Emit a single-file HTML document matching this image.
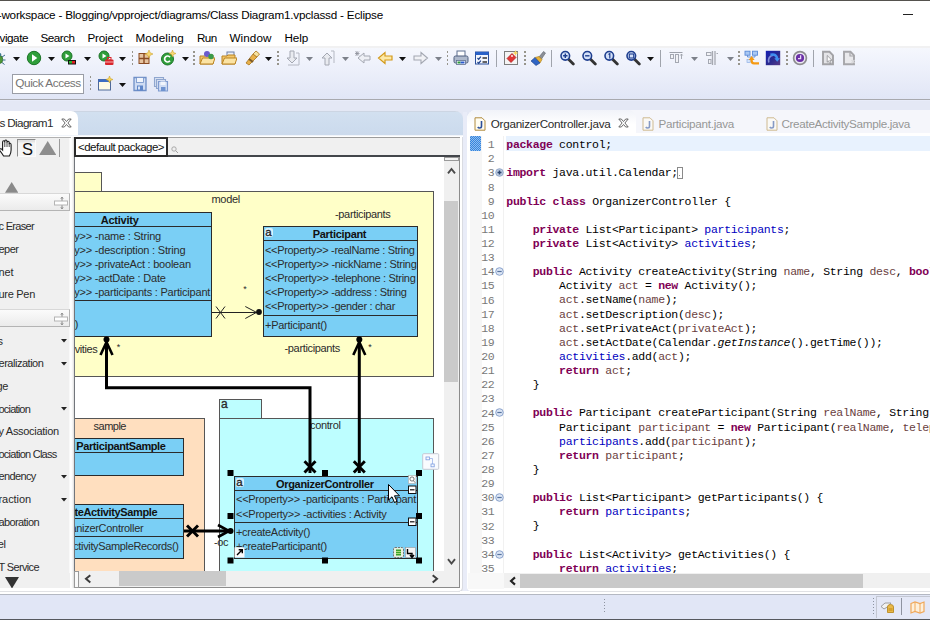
<!DOCTYPE html>
<html><head><meta charset="utf-8"><title>Eclipse</title>
<style>
html,body{margin:0;padding:0;background:#e4e8f5;}
body{width:930px;height:620px;overflow:hidden;position:relative;font-family:"Liberation Sans",sans-serif;}
.a{position:absolute;display:block;}
.t{position:absolute;white-space:nowrap;display:block;}
#root{position:absolute;left:0;top:0;width:930px;height:620px;overflow:hidden;}
</style></head><body><div id="root">
<div class="a" style="left:0px;top:0px;width:930px;height:1px;background:#55524e;"></div>
<div class="a" style="left:0px;top:1px;width:930px;height:46px;background:#fff;"></div>
<span class="t" style="letter-spacing:-0.209px;top:7.10px;font-size:11.7px;line-height:15px;color:#000;left:-2.3px;">-workspace - Blogging/vpproject/diagrams/Class Diagram1.vpclassd - Eclipse</span>
<div class="a" style="left:903px;top:14px;width:10px;height:1px;background:#222;"></div>
<span class="t" style="letter-spacing:-0.451px;top:30.30px;font-size:11.7px;line-height:15px;color:#000;left:-0.5px;">vigate</span>
<span class="t" style="letter-spacing:-0.508px;top:30.30px;font-size:11.7px;line-height:15px;color:#000;left:40.5px;">Search</span>
<span class="t" style="letter-spacing:-0.199px;top:30.30px;font-size:11.7px;line-height:15px;color:#000;left:87.5px;">Project</span>
<span class="t" style="letter-spacing:0.133px;top:30.30px;font-size:11.7px;line-height:15px;color:#000;left:135.5px;">Modeling</span>
<span class="t" style="letter-spacing:-0.651px;top:30.30px;font-size:11.7px;line-height:15px;color:#000;left:197.0px;">Run</span>
<span class="t" style="letter-spacing:0.070px;top:30.30px;font-size:11.7px;line-height:15px;color:#000;left:229.5px;">Window</span>
<span class="t" style="letter-spacing:-0.137px;top:30.30px;font-size:11.7px;line-height:15px;color:#000;left:284.5px;">Help</span>
<div class="a" style="left:0px;top:46px;width:930px;height:2px;background:#f1f1f2;"></div>
<div class="a" style="left:0px;top:48px;width:930px;height:51px;background:linear-gradient(#f5f7fd 0,#eef1fb 35%,#e7ebf8 70%,#e1e6f6 100%);"></div>
<div class="a" style="left:0px;top:99px;width:930px;height:521px;background:#e4e8f5;"></div>
<div class="a" style="left:0px;top:99px;width:930px;height:1px;background:#a8a9ae;"></div>
<div class="a" style="left:0px;top:100px;width:930px;height:1px;background:#e8ecf9;"></div>
<svg class="a" style="left:-9.0px;top:50.1px" width="16" height="16" viewBox="0 0 16 16"><ellipse cx="8.5" cy="9.5" rx="3.2" ry="4" fill="#4f9a3a" stroke="#2d6a22" stroke-width=".8"/><circle cx="8.5" cy="4.8" r="1.8" fill="#3d7a8e"/><path d="M11 7L14 5M11.5 10H14.5M11 12.5L13.5 14.5M6 7L4 5M5.5 10H3M6 12.5L4 14.5" stroke="#3d6f8e" stroke-width="1" fill="none"/></svg>
<svg class="a" style="left:12.5px;top:56.5px" width="7" height="4" viewBox="0 0 7 4"><path d="M0 0H7L3.5 4Z" fill="#111"/></svg>
<svg class="a" style="left:26.0px;top:50.1px" width="16" height="16" viewBox="0 0 16 16"><circle cx="8" cy="8" r="6.7" fill="#2f9e3a" stroke="#1d7428" stroke-width="1"/><path d="M6 4.3L11.3 8L6 11.7Z" fill="#fff"/></svg>
<svg class="a" style="left:48.0px;top:56.5px" width="7" height="4" viewBox="0 0 7 4"><path d="M0 0H7L3.5 4Z" fill="#111"/></svg>
<svg class="a" style="left:60.8px;top:50.1px" width="16" height="16" viewBox="0 0 16 16"><circle cx="6" cy="6" r="5" fill="#2f9e3a" stroke="#1d7428"/><path d="M4.5 3.5L8.5 6L4.5 8.5Z" fill="#fff"/><rect x="7" y="10" width="8" height="4.5" fill="#111"/><rect x="8" y="11" width="3" height="2.5" fill="#2db32d"/><rect x="11" y="11" width="3" height="2.5" fill="#e02020"/></svg>
<svg class="a" style="left:83.5px;top:56.5px" width="7" height="4" viewBox="0 0 7 4"><path d="M0 0H7L3.5 4Z" fill="#111"/></svg>
<svg class="a" style="left:97.7px;top:50.1px" width="16" height="16" viewBox="0 0 16 16"><circle cx="6" cy="6" r="5" fill="#2f9e3a" stroke="#1d7428"/><path d="M4.5 3.5L8.5 6L4.5 8.5Z" fill="#fff"/><rect x="7" y="9.5" width="8.5" height="5.5" rx="1" fill="#d8262c"/><rect x="9.5" y="7.5" width="3.5" height="2.5" fill="none" stroke="#d8262c"/><rect x="7" y="11.5" width="8.5" height="1" fill="#f6b0b0"/></svg>
<svg class="a" style="left:119.0px;top:56.5px" width="7" height="4" viewBox="0 0 7 4"><path d="M0 0H7L3.5 4Z" fill="#111"/></svg>
<div class="a" style="left:131.6px;top:50.5px;width:1.8px;height:16.0px;background:repeating-linear-gradient(#97958c 0 2px,transparent 2px 4.1px);"></div>
<svg class="a" style="left:137.0px;top:50.1px" width="16" height="16" viewBox="0 0 16 16"><rect x="2" y="3.5" width="10" height="10" fill="#e6c4a0" stroke="#8a4b23"/><path d="M7 3V14M2 8.5H12" stroke="#8a4b23" stroke-width="1.4"/><path d="M12 0L13.2 2.8L16 4L13.2 5.2L12 8L10.8 5.2L8 4L10.8 2.8Z" fill="#f7d774" stroke="#c79a1c" stroke-width=".5"/></svg>
<svg class="a" style="left:160.0px;top:50.1px" width="16" height="16" viewBox="0 0 16 16"><circle cx="7.5" cy="9" r="6" fill="#2f9e3a" stroke="#1d7428"/><path d="M10 7.2A3 3 0 1 0 10 10.8" stroke="#fff" stroke-width="1.7" fill="none"/><path d="M12.5 0L13.5 2.5L16 3.5L13.5 4.5L12.5 7L11.5 4.5L9 3.5L11.5 2.5Z" fill="#f7d774" stroke="#c79a1c" stroke-width=".5"/></svg>
<svg class="a" style="left:181.5px;top:56.5px" width="7" height="4" viewBox="0 0 7 4"><path d="M0 0H7L3.5 4Z" fill="#111"/></svg>
<div class="a" style="left:193.1px;top:50.5px;width:1.8px;height:16.0px;background:repeating-linear-gradient(#97958c 0 2px,transparent 2px 4.1px);"></div>
<svg class="a" style="left:198.5px;top:50.1px" width="16" height="16" viewBox="0 0 16 16"><path d="M1 6H6L7 5H14V14H1Z" fill="#f3c76a" stroke="#b98322"/><path d="M1 14L3.5 8H16L14 14Z" fill="#fbe3a3" stroke="#b98322"/><circle cx="8" cy="4" r="3" fill="#6a5acd"/><circle cx="12" cy="6.5" r="2.7" fill="#3a9a4a"/></svg>
<svg class="a" style="left:220.5px;top:50.1px" width="16" height="16" viewBox="0 0 16 16"><rect x="6" y="2" width="7" height="5" fill="#e8eef8" stroke="#6d7fa6"/><path d="M1 6H6L7 5H14V14H1Z" fill="#f3c76a" stroke="#b98322"/><path d="M1 14L3.5 8H16L14 14Z" fill="#fbe3a3" stroke="#b98322"/></svg>
<svg class="a" style="left:244.0px;top:50.1px" width="16" height="16" viewBox="0 0 16 16"><path d="M2 13L9 4L13 7L5 15Z" fill="#e8b04a" stroke="#a8741a" stroke-width=".8"/><path d="M9 4L12 1L15.5 4L13 7Z" fill="#f7e2a0" stroke="#a8741a" stroke-width=".8"/><path d="M5 9L9 12" stroke="#7a5a2a" stroke-width="2"/></svg>
<svg class="a" style="left:265.0px;top:56.5px" width="7" height="4" viewBox="0 0 7 4"><path d="M0 0H7L3.5 4Z" fill="#111"/></svg>
<div class="a" style="left:277.1px;top:50.5px;width:1.8px;height:16.0px;background:repeating-linear-gradient(#97958c 0 2px,transparent 2px 4.1px);"></div>
<svg class="a" style="left:283.5px;top:50.1px" width="16" height="16" viewBox="0 0 16 16"><path d="M6 1H10V8H13L8 13L3 8H6Z" fill="#e9ebf0" stroke="#a4a8b2"/><path d="M12 3H15V15H4" stroke="#b4b8c2" fill="none"/></svg>
<svg class="a" style="left:305.5px;top:56.5px" width="7" height="4" viewBox="0 0 7 4"><path d="M0 0H7L3.5 4Z" fill="#7d818a"/></svg>
<svg class="a" style="left:319.0px;top:50.1px" width="16" height="16" viewBox="0 0 16 16"><path d="M6 15H10V8H13L8 3L3 8H6Z" fill="#e9ebf0" stroke="#a4a8b2"/><path d="M12 1H15V13" stroke="#b4b8c2" fill="none"/></svg>
<svg class="a" style="left:341.5px;top:56.5px" width="7" height="4" viewBox="0 0 7 4"><path d="M0 0H7L3.5 4Z" fill="#7d818a"/></svg>
<svg class="a" style="left:355.0px;top:50.1px" width="16" height="16" viewBox="0 0 16 16"><path d="M15 6H9V3L3 8L9 13V10H15Z" fill="#eef0f5" stroke="#a4a8b2"/><path d="M2 1V6M0 3.5H4.5M.5 1.5L4 5.5M4 1.5L.5 5.5" stroke="#8d919a" stroke-width=".8"/></svg>
<svg class="a" style="left:377.0px;top:50.1px" width="16" height="16" viewBox="0 0 16 16"><path d="M15 6H8V2.5L1.5 8L8 13.5V10H15Z" fill="#fde9a6" stroke="#d39a1c" stroke-width="1.2"/></svg>
<svg class="a" style="left:398.5px;top:56.5px" width="7" height="4" viewBox="0 0 7 4"><path d="M0 0H7L3.5 4Z" fill="#111"/></svg>
<svg class="a" style="left:413.0px;top:50.1px" width="16" height="16" viewBox="0 0 16 16"><path d="M1 6H8V2.5L14.5 8L8 13.5V10H1Z" fill="#f1f2f6" stroke="#a4a8b2" stroke-width="1.1"/></svg>
<svg class="a" style="left:434.5px;top:56.5px" width="7" height="4" viewBox="0 0 7 4"><path d="M0 0H7L3.5 4Z" fill="#7d818a"/></svg>
<div class="a" style="left:446.6px;top:50.5px;width:1.8px;height:16.0px;background:repeating-linear-gradient(#97958c 0 2px,transparent 2px 4.1px);"></div>
<svg class="a" style="left:452.5px;top:50.1px" width="16" height="16" viewBox="0 0 16 16"><rect x="4" y="1" width="8" height="6" fill="#fff" stroke="#5d6f8f"/><rect x="1" y="6" width="14" height="7" rx="1.5" fill="#aeb9cc" stroke="#4f5f7f"/><rect x="3.5" y="10.5" width="9" height="4" fill="#fff" stroke="#5d6f8f" stroke-width=".8"/><rect x="4.5" y="11.5" width="3" height="2" fill="#2a9a3a"/><rect x="7.5" y="11.5" width="4" height="2" fill="#2a5acd"/></svg>
<svg class="a" style="left:474.0px;top:50.1px" width="16" height="16" viewBox="0 0 16 16"><rect x="1.5" y="2" width="13" height="12" fill="#f4f7fd" stroke="#2a4f9a"/><rect x="1.5" y="2" width="13" height="3" fill="#2a62c8"/><path d="M3.5 8l1.2 1.4L6.8 6.6M3.5 12l1.2 1.4L6.8 10.6" stroke="#1b3f8a" stroke-width="1.2" fill="none"/><path d="M8.5 8H13M8.5 12H13" stroke="#333" stroke-width="1.4"/></svg>
<div class="a" style="left:495.5px;top:50px;width:1px;height:17px;background:#a0a4ac;"></div>
<svg class="a" style="left:503.0px;top:50.1px" width="16" height="16" viewBox="0 0 16 16"><rect x="1.5" y="1.5" width="13" height="13" fill="#f4f4f4" stroke="#7d7d7d"/><path d="M4 8.5L9 3.5L13 7.5L8 12.5Z" fill="#e03636" stroke="#a61b1b" stroke-width=".7"/><circle cx="9" cy="6" r=".9" fill="#fff"/><path d="M12.5 0L13.3 2.2L15.5 3L13.3 3.8L12.5 6L11.7 3.8L9.5 3L11.7 2.2Z" fill="#f7d45a"/></svg>
<div class="a" style="left:524.1px;top:50.5px;width:1.8px;height:16.0px;background:repeating-linear-gradient(#97958c 0 2px,transparent 2px 4.1px);"></div>
<svg class="a" style="left:530.0px;top:50.1px" width="16" height="16" viewBox="0 0 16 16"><path d="M9 7L13.5 1.5L15.5 3L11.5 9Z" fill="#8a8f98" stroke="#5f646c" stroke-width=".6"/><path d="M5 7.5L9 6.5L12 9.5L10 13Z" fill="#e7b23a" stroke="#a87a16" stroke-width=".6"/><path d="M1 11L5 7.5L10 13L6 15.5Z" fill="#2f65c4" stroke="#1d3f85" stroke-width=".6"/></svg>
<div class="a" style="left:550.5px;top:50px;width:1px;height:17px;background:#a0a4ac;"></div>
<svg class="a" style="left:559.0px;top:50.1px" width="16" height="16" viewBox="0 0 16 16"><path d="M9.3 9L14.3 14" stroke="#333" stroke-width="2.8" stroke-linecap="round"/><circle cx="6.3" cy="5.8" r="4.3" fill="#d3e0f8" stroke="#1f3f8f" stroke-width="1.6"/><path d="M4.1 5.8H8.5M6.3 3.6V8" stroke="#1f3f8f" stroke-width="1.4"/></svg>
<svg class="a" style="left:581.0px;top:50.1px" width="16" height="16" viewBox="0 0 16 16"><path d="M9.3 9L14.3 14" stroke="#333" stroke-width="2.8" stroke-linecap="round"/><circle cx="6.3" cy="5.8" r="4.3" fill="#d3e0f8" stroke="#1f3f8f" stroke-width="1.6"/><path d="M4.1 5.8H8.5" stroke="#1f3f8f" stroke-width="1.4"/></svg>
<svg class="a" style="left:603.0px;top:50.1px" width="16" height="16" viewBox="0 0 16 16"><path d="M9.3 9L14.3 14" stroke="#333" stroke-width="2.8" stroke-linecap="round"/><circle cx="6.3" cy="5.8" r="4.3" fill="#d3e0f8" stroke="#1f3f8f" stroke-width="1.6"/><path d="M5.5 4.5L6.8 3.6V8.4" stroke="#1f3f8f" stroke-width="1.2" fill="none"/></svg>
<svg class="a" style="left:625.0px;top:50.1px" width="16" height="16" viewBox="0 0 16 16"><path d="M9.3 9L14.3 14" stroke="#333" stroke-width="2.8" stroke-linecap="round"/><circle cx="6.3" cy="5.8" r="4.3" fill="#d3e0f8" stroke="#1f3f8f" stroke-width="1.6"/><rect x="4.3" y="4" width="4.4" height="4" fill="none" stroke="#1f3f8f" stroke-width="1.1"/></svg>
<svg class="a" style="left:647.0px;top:56.5px" width="7" height="4" viewBox="0 0 7 4"><path d="M0 0H7L3.5 4Z" fill="#111"/></svg>
<div class="a" style="left:659.5px;top:50px;width:1px;height:17px;background:#a0a4ac;"></div>
<svg class="a" style="left:668.0px;top:50.1px" width="16" height="16" viewBox="0 0 16 16"><path d="M1.5 2.5H14.5" stroke="#9da1aa"/><rect x="2.5" y="4.5" width="3" height="4" fill="#f1f2f6" stroke="#a4a8b2"/><rect x="7.5" y="4.5" width="3" height="8" fill="#f1f2f6" stroke="#a4a8b2"/><path d="M13.5 4V9M12.3 5.5L13.5 4L14.7 5.5" stroke="#9da1aa" fill="none" stroke-width=".9"/></svg>
<svg class="a" style="left:690.5px;top:56.5px" width="7" height="4" viewBox="0 0 7 4"><path d="M0 0H7L3.5 4Z" fill="#7d818a"/></svg>
<svg class="a" style="left:704.0px;top:50.1px" width="16" height="16" viewBox="0 0 16 16"><path d="M8.5 1V15M11 1V15" stroke="#a6a9b1" stroke-width="1.3"/><rect x="2.5" y="2.5" width="4.5" height="3" fill="#f1f2f6" stroke="#a4a8b2"/><rect x="4.5" y="9.5" width="2.5" height="4" fill="#f1f2f6" stroke="#a4a8b2"/><path d="M12.5 3.5H14" stroke="#a4a8b2"/></svg>
<svg class="a" style="left:726.5px;top:56.5px" width="7" height="4" viewBox="0 0 7 4"><path d="M0 0H7L3.5 4Z" fill="#7d818a"/></svg>
<div class="a" style="left:738.1px;top:50.5px;width:1.8px;height:16.0px;background:repeating-linear-gradient(#97958c 0 2px,transparent 2px 4.1px);"></div>
<svg class="a" style="left:743.5px;top:50.1px" width="16" height="16" viewBox="0 0 16 16"><rect x="1" y="1.2" width="5" height="4" fill="#a9c8f3" stroke="#5a8ad8" stroke-width=".9"/><rect x="8.5" y="1.2" width="5" height="4" fill="#a9c8f3" stroke="#5a8ad8" stroke-width=".9"/><path d="M3.5 5.2V7H11V5.2" stroke="#5a8ad8" fill="none" stroke-width=".9"/><rect x="3" y="9.5" width="3.2" height="3" fill="#d5e4f9" stroke="#8fb0e6" stroke-width=".7"/><path d="M15 13.3H10Q7.6 13.3 7.6 10.8V8.5" stroke="#f59a14" stroke-width="2.3" fill="none"/><path d="M4.6 10L7.6 6L10.6 10Z" fill="#f59a14"/></svg>
<svg class="a" style="left:765.0px;top:50.1px" width="16" height="16" viewBox="0 0 16 16"><defs><linearGradient id="gb" x1="0" y1="0" x2="1" y2="1"><stop offset="0" stop-color="#1420b4"/><stop offset=".55" stop-color="#2a2a8e"/><stop offset="1" stop-color="#5a3a86"/></linearGradient></defs><rect x=".8" y=".8" width="14.4" height="14.4" fill="url(#gb)"/><path d="M3.8 12.5Q2.5 6.5 8 5.2" stroke="#9aa6e8" stroke-width="1.6" fill="none" opacity=".8"/><path d="M5.5 4.8Q11.5 3.2 12.2 9" stroke="#3f8ff0" stroke-width="2.6" fill="none"/><path d="M9.3 8.2H15L12.2 11.8Z" fill="#3f8ff0"/></svg>
<div class="a" style="left:786.1px;top:50.5px;width:1.8px;height:16.0px;background:repeating-linear-gradient(#97958c 0 2px,transparent 2px 4.1px);"></div>
<svg class="a" style="left:792.0px;top:50.1px" width="16" height="16" viewBox="0 0 16 16"><circle cx="8" cy="8" r="6.4" fill="#ece9f3" stroke="#8d8d90" stroke-width="1.7"/><circle cx="8" cy="8" r="4.1" fill="#6a2fa6"/><path d="M8.6 5.3V8.6H6" stroke="#e9dcf6" stroke-width="1.3" fill="none"/></svg>
<div class="a" style="left:812.5px;top:50px;width:1px;height:17px;background:#a0a4ac;"></div>
<svg class="a" style="left:820.0px;top:50.1px" width="16" height="16" viewBox="0 0 16 16"><path d="M3 1.8H9.5L13 5.3V14.2H3Z" fill="#e4e4e7" stroke="#a2a2a6" stroke-width="1.9"/><path d="M7.2 5.5L12 10.3H9.8L11 13.2L9.8 13.8L8.5 10.9L7.2 12.2Z" fill="#fdfdfd" stroke="#8e8e92" stroke-width=".8"/></svg>
<svg class="a" style="left:841.0px;top:50.1px" width="16" height="16" viewBox="0 0 16 16"><path d="M3 1.8H9.5L13 5.3V14.2H3Z" fill="#e9e9ec" stroke="#a6a6aa" stroke-width="1.9"/><path d="M9 2.5V6H12.5" stroke="#a6a6aa" fill="none" stroke-width="1.2"/><path d="M10.5 10L13.5 13M13.5 10L10.5 13" stroke="#d9d9dc" stroke-width="1.2"/></svg>
<div class="a" style="left:12px;top:74px;width:72px;height:19.5px;background:#fff;border:1px solid #9a9da6;box-sizing:border-box;"></div>
<span class="t" style="letter-spacing:-0.451px;top:76.30px;font-size:11.8px;line-height:15px;color:#747474;left:15.3px;">Quick Access</span>
<div class="a" style="left:89.6px;top:76px;width:1.8px;height:16px;background:repeating-linear-gradient(#97958c 0 2px,transparent 2px 4.1px);"></div>
<svg class="a" style="left:96.5px;top:76.0px" width="16" height="16" viewBox="0 0 16 16"><rect x="1.5" y="3.5" width="12" height="10.5" fill="#fffbe6" stroke="#4f6a9a"/><rect x="1.5" y="3.5" width="12" height="2.5" fill="#3b6cc4"/><path d="M12.5 0L13.5 2.5L16 3.5L13.5 4.5L12.5 7L11.5 4.5L9 3.5L11.5 2.5Z" fill="#f7d45a" stroke="#c79a1c" stroke-width=".5"/></svg>
<svg class="a" style="left:118.5px;top:83.0px" width="7" height="4" viewBox="0 0 7 4"><path d="M0 0H7L3.5 4Z" fill="#111"/></svg>
<svg class="a" style="left:132.0px;top:76.0px" width="16" height="16" viewBox="0 0 16 16"><path d="M2 1.5H14V14.5H2Z" fill="#cfdcf3" stroke="#6f8fc7" stroke-width="1.3"/><rect x="4.5" y="1.5" width="7" height="5" fill="#f1f5fc" stroke="#6f8fc7" stroke-width=".8"/><rect x="5" y="9.5" width="6" height="5" fill="#5f86c9"/><rect x="6" y="10.5" width="2" height="3" fill="#dbe6f8"/></svg>
<svg class="a" style="left:153.0px;top:76.0px" width="16" height="16" viewBox="0 0 16 16"><path d="M1.5 1.5H10.5V10.5H1.5Z" fill="#d7e0f2" stroke="#8fa6cf" stroke-width="1.1"/><path d="M3.5 3.5H12.5V12.5H3.5Z" fill="#d7e0f2" stroke="#8fa6cf" stroke-width="1.1"/><path d="M5.5 5.5H14.5V15H5.5Z" fill="#cfdcf3" stroke="#7f9bd0" stroke-width="1.1"/><rect x="7.5" y="5.5" width="5" height="3.5" fill="#f1f5fc"/><rect x="8" y="11" width="4.5" height="4" fill="#6f93d0"/></svg>
<div class="a" style="left:463px;top:112px;width:4.2px;height:479px;background:#e9ecf8;"></div>
<div class="a" style="left:0px;top:110.5px;width:463.2px;height:481px;background:#fff;border-radius:0 9px 4px 0;box-shadow:inset -1px -1px 0 #d9dbe2;"></div>
<div class="a" style="left:0px;top:110.5px;width:462.7px;height:24px;border-radius:0 8px 0 0;background:linear-gradient(#c9d0dc 0,#d2e0f0 1.5px,#cddcee 70%,#ccdaec);"></div>
<div class="a" style="left:-10px;top:110.5px;width:88px;height:25px;background:#fff;border-radius:0 7px 0 0;"></div>
<span class="t" style="letter-spacing:-0.647px;top:114.80px;font-size:11.7px;line-height:15px;color:#2a2a2a;left:-0.5px;">s Diagram1</span>
<svg class="a" style="left:61.3px;top:117.9px" width="11" height="10" viewBox="0 0 11 10"><path d="M.8 1L3.3 1L5.5 3.5L7.7 1L10.2 1L6.9 5L10.2 9L7.7 9L5.5 6.5L3.3 9L.8 9L4.1 5Z" fill="none" stroke="#5a5a5a" stroke-width=".9"/></svg>
<div class="a" style="left:0px;top:134.5px;width:462.5px;height:2.5px;background:linear-gradient(#e6edf6,#fff 60%);"></div>
<div class="a" style="left:0px;top:136.5px;width:69.5px;height:451.5px;background:#f0f0f0;"></div>
<div class="a" style="left:69.3px;top:136.5px;width:4.7px;height:451.5px;background:linear-gradient(90deg,#f6f6f6,#fff 30%,#fcfcfc 60%,#dcdcdc);"></div>
<div class="a" style="left:0px;top:136.6px;width:70.5px;height:1px;background:#b2b2b2;"></div>
<svg class="a" style="left:-1px;top:138.5px" width="13" height="18" viewBox="0 0 13 18"><path d="M3.6 10.5V3.2Q3.6 1.8 4.7 1.8Q5.8 1.8 5.8 3.2V2.4Q5.8 1 6.9 1Q8 1 8 2.4V3.4Q8 2.2 9.1 2.2Q10.2 2.2 10.2 3.6V5.2Q10.3 4.2 11.2 4.3Q12.1 4.5 12.1 5.8V11Q12.1 14 10.4 17H4.6Q3.2 14.5 1 11.8Q.2 10.6 1 9.9Q2 9.3 3.6 11Z" fill="#fff" stroke="#1a1a1a" stroke-width="1.1"/><path d="M5.8 3V8M8 3V8M10.2 4.5V8" stroke="#333" stroke-width=".9"/></svg>
<div class="a" style="left:17.4px;top:138.5px;width:18.5px;height:18.5px;border:1px solid #8a8a8a;box-sizing:border-box;border-right-color:#fbfbfb;border-bottom-color:#fbfbfb;background:linear-gradient(#dedede 0,#e6e6e6 2px,#f5f5f5 3px);"></div>
<span class="t" style="top:138.50px;font-size:16.5px;line-height:21px;color:#111;left:27.5px;transform:translateX(-50%);">S</span>
<svg class="a" style="left:38.5px;top:140.5px" width="17.4" height="14.2" viewBox="0 0 17.4 14.2"><path d="M8.7 0L17.4 14.2H0Z" fill="#8e8e8e"/></svg>
<div class="a" style="left:59px;top:139px;width:1px;height:18px;background:#9a9a9a;"></div>
<svg class="a" style="left:4.5px;top:182px" width="13.4" height="10.8" viewBox="0 0 13.4 10.8"><path d="M6.7 0L13.4 10.8H0Z" fill="#8a8a8a"/></svg>
<div class="a" style="left:-2px;top:193.0px;width:72.3px;height:18.4px;border:1px solid #b4b4b4;box-sizing:border-box;border-top-color:#d8d8d8;background:linear-gradient(#fbfbfb,#ebebeb);"></div>
<svg class="a" style="left:53px;top:196.0px" width="16" height="14" viewBox="0 0 16 14"><path d="M9 1V13" stroke="#a0a0a0" stroke-width="1.3"/><path d="M7.8 2.8L9 1L10.2 2.8M7.8 11.2L9 13L10.2 11.2" stroke="#8c8c8c" stroke-width=".9" fill="none"/><rect x="1.5" y="5" width="13" height="4" fill="#fff" stroke="#b4b4b4" stroke-width="1"/></svg>
<div class="a" style="left:-2px;top:309.0px;width:72.3px;height:18.4px;border:1px solid #b4b4b4;box-sizing:border-box;border-top-color:#d8d8d8;background:linear-gradient(#fbfbfb,#ebebeb);"></div>
<svg class="a" style="left:53px;top:312.0px" width="16" height="14" viewBox="0 0 16 14"><path d="M9 1V13" stroke="#a0a0a0" stroke-width="1.3"/><path d="M7.8 2.8L9 1L10.2 2.8M7.8 11.2L9 13L10.2 11.2" stroke="#8c8c8c" stroke-width=".9" fill="none"/><rect x="1.5" y="5" width="13" height="4" fill="#fff" stroke="#b4b4b4" stroke-width="1"/></svg>
<span class="t" style="letter-spacing:-0.684px;top:219.00px;font-size:11px;line-height:14px;color:#2a2a2a;left:-1.5px;">c Eraser</span>
<span class="t" style="letter-spacing:-0.508px;top:242.00px;font-size:11px;line-height:14px;color:#2a2a2a;left:-1.5px;">eper</span>
<span class="t" style="letter-spacing:-0.099px;top:264.50px;font-size:11px;line-height:14px;color:#2a2a2a;left:-1.5px;">net</span>
<span class="t" style="letter-spacing:-0.290px;top:287.00px;font-size:11px;line-height:14px;color:#2a2a2a;left:-1.5px;">ure Pen</span>
<span class="t" style="top:333.80px;font-size:11px;line-height:14px;color:#2a2a2a;right:927.3px;letter-spacing:-.4px;">s</span>
<svg class="a" style="left:61px;top:339.3px" width="6" height="4" viewBox="0 0 6 4"><path d="M0 0H6L3 3.5Z" fill="#222"/></svg>
<span class="t" style="letter-spacing:-0.476px;top:356.40px;font-size:11px;line-height:14px;color:#2a2a2a;left:-1.5px;">eralization</span>
<svg class="a" style="left:61px;top:361.90000000000003px" width="6" height="4" viewBox="0 0 6 4"><path d="M0 0H6L3 3.5Z" fill="#222"/></svg>
<span class="t" style="top:379.00px;font-size:11px;line-height:14px;color:#2a2a2a;right:922.1px;letter-spacing:-.4px;">ge</span>
<span class="t" style="letter-spacing:-0.803px;top:401.60px;font-size:11px;line-height:14px;color:#2a2a2a;left:-1.5px;">ociation</span>
<svg class="a" style="left:61px;top:407.1px" width="6" height="4" viewBox="0 0 6 4"><path d="M0 0H6L3 3.5Z" fill="#222"/></svg>
<span class="t" style="letter-spacing:-0.300px;top:424.20px;font-size:11px;line-height:14px;color:#2a2a2a;left:-1.5px;">y Association</span>
<span class="t" style="letter-spacing:-0.749px;top:446.80px;font-size:11px;line-height:14px;color:#2a2a2a;left:-1.5px;">ociation Class</span>
<span class="t" style="letter-spacing:-0.628px;top:469.40px;font-size:11px;line-height:14px;color:#2a2a2a;left:-1.5px;">endency</span>
<svg class="a" style="left:61px;top:474.90000000000003px" width="6" height="4" viewBox="0 0 6 4"><path d="M0 0H6L3 3.5Z" fill="#222"/></svg>
<span class="t" style="letter-spacing:-0.076px;top:492.00px;font-size:11px;line-height:14px;color:#2a2a2a;left:-1.5px;">raction</span>
<svg class="a" style="left:61px;top:497.5px" width="6" height="4" viewBox="0 0 6 4"><path d="M0 0H6L3 3.5Z" fill="#222"/></svg>
<span class="t" style="letter-spacing:-0.608px;top:514.60px;font-size:11px;line-height:14px;color:#2a2a2a;left:-1.5px;">aboration</span>
<span class="t" style="top:537.20px;font-size:11px;line-height:14px;color:#2a2a2a;right:924.4px;letter-spacing:-.4px;">el</span>
<span class="t" style="letter-spacing:-0.652px;top:559.80px;font-size:11px;line-height:14px;color:#2a2a2a;left:-1.5px;">T Service</span>
<div class="a" style="left:0px;top:573px;width:70px;height:15px;background:#f0f0f0;"></div>
<svg class="a" style="left:5px;top:576.5px" width="14" height="11.5" viewBox="0 0 14 11.5"><path d="M0 0H14L7 11.5Z" fill="#333"/></svg>
<div class="a" style="left:74px;top:137px;width:386px;height:19px;background:#f0f0f0;border-top:1px solid #9c9c9c;box-sizing:border-box;"></div>
<div class="a" style="left:74px;top:155px;width:386px;height:2px;background:#43464b;"></div>
<div class="a" style="left:73.5px;top:136.5px;width:94.5px;height:20.5px;background:#fff;border:2px solid #2a2a2a;box-sizing:border-box;"></div>
<span class="t" style="letter-spacing:-0.508px;top:139.50px;font-size:11.5px;line-height:15px;color:#111;left:78px;">&lt;default package&gt;</span>
<svg class="a" style="left:171px;top:146px" width="8" height="8" viewBox="0 0 8 8"><circle cx="3" cy="3" r="2.2" fill="none" stroke="#999" stroke-width=".8"/><path d="M4.7 4.7L7 7" stroke="#999" stroke-width=".9"/></svg>
<div class="a" style="left:74px;top:157px;width:369.5px;height:414px;background:#fff;overflow:hidden;">
<div class="a" style="left:-74px;top:-157px;width:930px;height:620px;">
<div class="a" style="left:60px;top:172px;width:42px;height:20px;background:#ffffc8;border:1px solid #565656;box-sizing:border-box;"></div>
<div class="a" style="left:60px;top:191px;width:374px;height:186px;background:#ffffc8;border:1px solid #565656;box-sizing:border-box;"></div>
<span class="t" style="letter-spacing:-0.294px;top:192.00px;font-size:11px;line-height:14px;color:#2c2c2c;left:211.5px;">model</span>
<div class="a" style="left:40px;top:212px;width:172px;height:124.5px;background:#7acff5;border:1px solid #2b2b2b;box-sizing:border-box;"></div>
<div class="a" style="left:40px;top:226px;width:172px;height:1px;background:#2b2b2b;"></div>
<div class="a" style="left:40px;top:300.2px;width:172px;height:1px;background:#2b2b2b;"></div>
<span class="t" style="letter-spacing:-0.244px;top:212.50px;font-size:11px;line-height:14px;color:#111;font-weight:bold;left:100.8px;">Activity</span>
<span class="t" style="letter-spacing:-0.206px;top:228.70px;font-size:11px;line-height:14px;color:#2c2c2c;left:74.2px;">y&gt;&gt; -name : String</span>
<span class="t" style="letter-spacing:-0.199px;top:242.80px;font-size:11px;line-height:14px;color:#2c2c2c;left:74.2px;">y&gt;&gt; -description : String</span>
<span class="t" style="letter-spacing:-0.228px;top:256.90px;font-size:11px;line-height:14px;color:#2c2c2c;left:74.2px;">y&gt;&gt; -privateAct : boolean</span>
<span class="t" style="letter-spacing:-0.200px;top:271.00px;font-size:11px;line-height:14px;color:#2c2c2c;left:74.2px;">y&gt;&gt; -actDate : Date</span>
<span class="t" style="letter-spacing:-0.209px;top:285.10px;font-size:11px;line-height:14px;color:#2c2c2c;left:74.2px;">y&gt;&gt; -participants : Participant</span>
<span class="t" style="top:317.00px;font-size:11px;line-height:14px;color:#2c2c2c;right:852px;letter-spacing:-.3px;">+Activity()</span>
<div class="a" style="left:263px;top:226px;width:154.5px;height:110.5px;background:#7acff5;border:1px solid #2b2b2b;box-sizing:border-box;"></div>
<div class="a" style="left:263px;top:240px;width:154.5px;height:1px;background:#2b2b2b;"></div>
<div class="a" style="left:263px;top:315px;width:154.5px;height:1px;background:#2b2b2b;"></div>
<div class="a" style="left:265px;top:228px;width:7.5px;height:9px;background:rgba(255,255,255,.7);border-radius:2px;"></div>
<span class="t" style="top:224.50px;font-size:11.5px;line-height:15px;color:#222;left:265.3px;-webkit-text-stroke:.3px #222;">a</span>
<span class="t" style="letter-spacing:-0.314px;top:226.70px;font-size:11px;line-height:14px;color:#111;font-weight:bold;left:312.8px;">Participant</span>
<span class="t" style="letter-spacing:-0.325px;top:243.00px;font-size:11px;line-height:14px;color:#2c2c2c;left:265px;">&lt;&lt;Property&gt;&gt; -realName : String</span>
<span class="t" style="letter-spacing:-0.300px;top:257.10px;font-size:11px;line-height:14px;color:#2c2c2c;left:265px;">&lt;&lt;Property&gt;&gt; -nickName : String</span>
<span class="t" style="letter-spacing:-0.304px;top:271.20px;font-size:11px;line-height:14px;color:#2c2c2c;left:265px;">&lt;&lt;Property&gt;&gt; -telephone : String</span>
<span class="t" style="letter-spacing:-0.318px;top:285.30px;font-size:11px;line-height:14px;color:#2c2c2c;left:265px;">&lt;&lt;Property&gt;&gt; -address : String</span>
<span class="t" style="letter-spacing:-0.326px;top:299.40px;font-size:11px;line-height:14px;color:#2c2c2c;left:265px;">&lt;&lt;Property&gt;&gt; -gender : char</span>
<span class="t" style="letter-spacing:-0.267px;top:317.50px;font-size:11px;line-height:14px;color:#2c2c2c;left:265px;">+Participant()</span>
<span class="t" style="letter-spacing:-0.340px;top:207.00px;font-size:11px;line-height:14px;color:#2c2c2c;left:335px;">-participants</span>
<span class="t" style="letter-spacing:-0.340px;top:341.00px;font-size:11px;line-height:14px;color:#2c2c2c;left:284.5px;">-participants</span>
<span class="t" style="top:340.50px;font-size:9px;line-height:12px;color:#2c2c2c;left:368.3px;">*</span>
<span class="t" style="top:283.00px;font-size:9px;line-height:12px;color:#2c2c2c;left:243.3px;">*</span>
<span class="t" style="top:341.50px;font-size:11px;line-height:14px;color:#2c2c2c;right:832.7px;letter-spacing:-.4px;">-activities</span>
<span class="t" style="top:340.50px;font-size:9px;line-height:12px;color:#2c2c2c;left:116.8px;">*</span>
<div class="a" style="left:60px;top:418px;width:144.5px;height:170px;background:#ffdfbf;border:1px solid #565656;box-sizing:border-box;"></div>
<span class="t" style="letter-spacing:-0.495px;top:419.00px;font-size:11px;line-height:14px;color:#2c2c2c;left:93.5px;">sample</span>
<div class="a" style="left:40px;top:438px;width:144px;height:38.3px;background:#7acff5;border:1px solid #2b2b2b;box-sizing:border-box;"></div>
<div class="a" style="left:40px;top:452px;width:144px;height:1px;background:#2b2b2b;"></div>
<span class="t" style="letter-spacing:-0.399px;top:439.00px;font-size:11px;line-height:14px;color:#111;font-weight:bold;left:76.3px;">ParticipantSample</span>
<div class="a" style="left:40px;top:504px;width:144px;height:54.5px;background:#7acff5;border:1px solid #2b2b2b;box-sizing:border-box;"></div>
<div class="a" style="left:40px;top:518.2px;width:144px;height:1px;background:#2b2b2b;"></div>
<div class="a" style="left:40px;top:536px;width:144px;height:1px;background:#2b2b2b;"></div>
<span class="t" style="top:505.20px;font-size:11px;line-height:14px;color:#111;font-weight:bold;right:772.7px;letter-spacing:-.36px;">CreateActivitySample</span>
<span class="t" style="top:521.00px;font-size:11px;line-height:14px;color:#2c2c2c;right:786.7px;letter-spacing:-.3px;">-oc : OrganizerController</span>
<span class="t" style="top:539.20px;font-size:11px;line-height:14px;color:#2c2c2c;right:751.4px;letter-spacing:-.35px;">+createActivitySampleRecords()</span>
<div class="a" style="left:218.7px;top:398.6px;width:43px;height:20px;background:#bdfeff;border:1px solid #565656;box-sizing:border-box;"></div>
<span class="t" style="top:396.20px;font-size:12px;line-height:16px;color:#2a2a2a;left:220.9px;-webkit-text-stroke:.35px #2a2a2a;">a</span>
<div class="a" style="left:218.7px;top:417.6px;width:215.3px;height:170px;background:#bdfeff;border:1px solid #565656;box-sizing:border-box;"></div>
<span class="t" style="letter-spacing:-0.362px;top:418.20px;font-size:11px;line-height:14px;color:#2c2c2c;left:310px;">control</span>
<span class="t" style="letter-spacing:-0.427px;top:535.00px;font-size:11px;line-height:14px;color:#2c2c2c;left:214px;">-oc</span>
<div class="a" style="left:234px;top:476px;width:183.5px;height:82.5px;background:#7acff5;border:1px solid #2b2b2b;box-sizing:border-box;"></div>
<div class="a" style="left:234px;top:490px;width:183.5px;height:1px;background:#2b2b2b;"></div>
<div class="a" style="left:234px;top:522px;width:183.5px;height:1px;background:#2b2b2b;"></div>
<div class="a" style="left:236px;top:478px;width:7.5px;height:9px;background:rgba(255,255,255,.7);border-radius:2px;"></div>
<span class="t" style="top:474.50px;font-size:11.5px;line-height:15px;color:#222;left:236.3px;-webkit-text-stroke:.3px #222;">a</span>
<span class="t" style="letter-spacing:-0.321px;top:476.70px;font-size:11px;line-height:14px;color:#111;font-weight:bold;left:276px;">OrganizerController</span>
<span class="t" style="letter-spacing:-0.285px;top:492.30px;font-size:11px;line-height:14px;color:#2c2c2c;left:236px;">&lt;&lt;Property&gt;&gt; -participants : Participant</span>
<span class="t" style="letter-spacing:-0.259px;top:507.00px;font-size:11px;line-height:14px;color:#2c2c2c;left:236px;">&lt;&lt;Property&gt;&gt; -activities : Activity</span>
<span class="t" style="letter-spacing:-0.304px;top:524.50px;font-size:11px;line-height:14px;color:#2c2c2c;left:236px;">+createActivity()</span>
<span class="t" style="letter-spacing:-0.265px;top:539.00px;font-size:11px;line-height:14px;color:#2c2c2c;left:236px;">+createParticipant()</span>
<svg class="a" style="left:0;top:0" width="930" height="620"><path d="M212 312.5H259" stroke="#222" stroke-width="1" fill="none"/><path d="M216 306.5L225 318.5M225 306.5L216 318.5" stroke="#222" stroke-width="1" fill="none"/><path d="M245.3 306.5L256.5 312.4L245.3 318.5" stroke="#222" stroke-width="1" fill="none"/><circle cx="259" cy="312" r="2.9" fill="#111"/><path d="M106.5 341V387.7H310V473" stroke="#000" stroke-width="3" fill="none"/><path d="M359.3 341V473" stroke="#000" stroke-width="3" fill="none"/><circle cx="106.5" cy="339.5" r="3" fill="#000"/><path d="M100.5 355L106.5 342L112.5 355" stroke="#000" stroke-width="2.6" fill="none"/><circle cx="359.3" cy="339.5" r="3" fill="#000"/><path d="M353.3 355L359.3 342L365.3 355" stroke="#000" stroke-width="2.6" fill="none"/><path d="M304.5 461.3L315.5 472.6M315.5 461.3L304.5 472.6" stroke="#000" stroke-width="2.9" fill="none"/><path d="M353.8 461.3L364.8 472.6M364.8 461.3L353.8 472.6" stroke="#000" stroke-width="2.9" fill="none"/><path d="M184 531H229" stroke="#000" stroke-width="3" fill="none"/><path d="M187 525.5L198 536.5M198 525.5L187 536.5" stroke="#000" stroke-width="2.9" fill="none"/><path d="M218 525L229 531L218 537" stroke="#000" stroke-width="2.6" fill="none"/><circle cx="230.5" cy="531" r="3" fill="#000"/><rect x="227.5" y="470" width="6" height="6" fill="#000"/><rect x="322" y="470" width="6" height="6" fill="#000"/><rect x="416" y="470" width="6" height="6" fill="#000"/><rect x="227.5" y="513" width="6" height="6" fill="#000"/><rect x="416" y="513" width="6" height="6" fill="#000"/><rect x="227.5" y="557.5" width="6" height="6" fill="#000"/><rect x="322" y="557.5" width="6" height="6" fill="#000"/><rect x="416" y="557.5" width="6" height="6" fill="#000"/><rect x="408.5" y="486" width="7.5" height="7.5" fill="#fff" stroke="#111" stroke-width="1"/><path d="M410 489.8H414.5" stroke="#111" stroke-width="1.2"/><rect x="408.5" y="518" width="7.5" height="7.5" fill="#fff" stroke="#111" stroke-width="1"/><path d="M410 521.8H414.5" stroke="#111" stroke-width="1.2"/><rect x="408.5" y="475.5" width="7.5" height="8" fill="#fff" stroke="#aaa" stroke-width=".6"/><circle cx="412" cy="479" r="2.1" fill="none" stroke="#555" stroke-width=".8"/><path d="M413.5 480.8L415.3 482.8" stroke="#555" stroke-width=".8"/><rect x="234.5" y="547.3" width="10" height="10.2" fill="#fafafa"/><path d="M237 555L242 550M238.7 549.7H242.3V553.3" stroke="#000" stroke-width="1.4" fill="none"/><rect x="393.5" y="547.5" width="10" height="10" rx="1.5" fill="#e8f0e0" stroke="#777" stroke-dasharray="2 1" stroke-width="1"/><rect x="396" y="549.5" width="5" height="6" fill="#3aa22a"/><path d="M396 551.5H401M396 553.5H401" stroke="#d8f0a0" stroke-width=".7"/><rect x="405.5" y="547.5" width="10" height="10" fill="#f4f4f4" stroke="#999" stroke-width=".6"/><path d="M407.5 549V553.5H412V557M410 555L412 557.5L414 555" stroke="#000" stroke-width="1.4" fill="none"/><rect x="422.7" y="453.7" width="16" height="15.6" rx="1" fill="#f9fbfe" stroke="#c4c9d4" stroke-width="1"/><rect x="426" y="457" width="3.5" height="2.8" fill="none" stroke="#7a9ce0" stroke-width=".8"/><path d="M429.5 458.5H432.5V464" stroke="#9ab4e8" stroke-width=".8" fill="none"/><rect x="431" y="464" width="3.2" height="2.8" fill="none" stroke="#7a9ce0" stroke-width=".8"/><path d="M388.5 484.5V500L392 496.8L394.5 502.5L397 501.3L394.5 495.8H399.5Z" fill="#fff" stroke="#000" stroke-width="1"/></svg>
<div class="a" style="left:73.9px;top:157px;width:1.1px;height:414px;background:#72767c;"></div>
</div></div>
<div class="a" style="left:443.5px;top:157px;width:16px;height:414px;background:#f0f0f0;"></div>
<div class="a" style="left:443.5px;top:157px;width:15px;height:4px;background:#f4f4f4;border:1px solid #9a9a9a;box-sizing:border-box;"></div>
<svg class="a" style="left:446.5px;top:167px" width="9" height="7.5" viewBox="0 0 9 7.5"><path d="M1 6.3L4.5 2L8 6.3" stroke="#4a4a4a" stroke-width="1.9" fill="none"/></svg>
<div class="a" style="left:444px;top:201px;width:14px;height:181px;background:#cacaca;"></div>
<svg class="a" style="left:446.5px;top:557.5px" width="9" height="7.5" viewBox="0 0 9 7.5"><path d="M1 1.2L4.5 5.5L8 1.2" stroke="#4a4a4a" stroke-width="1.9" fill="none"/></svg>
<div class="a" style="left:74px;top:571px;width:385.5px;height:16.5px;background:#f0f0f0;"></div>
<div class="a" style="left:73.5px;top:586.5px;width:386.5px;height:1.2px;background:#8c8c8c;"></div>
<div class="a" style="left:458.8px;top:157px;width:1.2px;height:430.7px;background:#8c8c8c;"></div>
<div class="a" style="left:74px;top:571px;width:5px;height:17px;background:#fafafa;border:1px solid #9a9a9a;box-sizing:border-box;"></div>
<svg class="a" style="left:84px;top:574px" width="8" height="10" viewBox="0 0 8 10"><path d="M6.3 1.2L2 4.8L6.3 8.4" stroke="#3c3c3c" stroke-width="2" fill="none"/></svg>
<div class="a" style="left:118.7px;top:571.3px;width:107.3px;height:15px;background:#cacaca;"></div>
<svg class="a" style="left:430.5px;top:574px" width="8" height="10" viewBox="0 0 8 10"><path d="M1.7 1.2L6 4.8L1.7 8.4" stroke="#3c3c3c" stroke-width="2" fill="none"/></svg>
<div class="a" style="left:467px;top:110.2px;width:470px;height:481.3px;background:#fff;border-radius:9px 0 0 4px;"></div>
<div class="a" style="left:467px;top:110.2px;width:470px;height:23.3px;background:#f5f6fb;border-radius:9px 0 0 0;"></div>
<div class="a" style="left:467px;top:110.2px;width:169px;height:24px;border-radius:9px 8px 0 0;background:linear-gradient(#f1f3f9,#fff 60%);"></div>
<svg class="a" style="left:474px;top:116.7px" width="12" height="14" viewBox="0 0 12 14"><g><path d="M1 .8H8L11 3.8V13.2H1Z" fill="#fffdf2" stroke="#b08a3c" stroke-width="1"/><path d="M7.5 4V9.3Q7.5 11 5.6 11Q4.4 11 3.8 10" stroke="#2b4f9a" stroke-width="1.6" fill="none"/></g></svg>
<span class="t" style="letter-spacing:-0.260px;top:115.80px;font-size:11.7px;line-height:15px;color:#2a2a2a;left:490.7px;">OrganizerController.java</span>
<svg class="a" style="left:618.4px;top:118.2px" width="11" height="10" viewBox="0 0 11 10"><path d="M.8 1L3.3 1L5.5 3.5L7.7 1L10.2 1L6.9 5L10.2 9L7.7 9L5.5 6.5L3.3 9L.8 9L4.1 5Z" fill="none" stroke="#5a5a5a" stroke-width=".9"/></svg>
<svg class="a" style="left:642px;top:116.7px" width="12" height="14" viewBox="0 0 12 14"><g opacity=".55"><path d="M1 .8H8L11 3.8V13.2H1Z" fill="#fffdf2" stroke="#b08a3c" stroke-width="1"/><path d="M7.5 4V9.3Q7.5 11 5.6 11Q4.4 11 3.8 10" stroke="#2b4f9a" stroke-width="1.6" fill="none"/></g></svg>
<span class="t" style="letter-spacing:-0.276px;top:115.80px;font-size:11.7px;line-height:15px;color:#969696;left:658.5px;">Participant.java</span>
<svg class="a" style="left:765.5px;top:116.7px" width="12" height="14" viewBox="0 0 12 14"><g opacity=".55"><path d="M1 .8H8L11 3.8V13.2H1Z" fill="#fffdf2" stroke="#b08a3c" stroke-width="1"/><path d="M7.5 4V9.3Q7.5 11 5.6 11Q4.4 11 3.8 10" stroke="#2b4f9a" stroke-width="1.6" fill="none"/></g></svg>
<span class="t" style="letter-spacing:-0.313px;top:115.80px;font-size:11.7px;line-height:15px;color:#969696;left:781.4px;">CreateActivitySample.java</span>
<div class="a" style="left:467px;top:136px;width:463px;height:437px;overflow:hidden;background:#fff;">
<div class="a" style="left:-467px;top:-136px;width:930px;height:620px;">
<div class="a" style="left:470px;top:136px;width:12px;height:437px;background:#f6f6f6;"></div>
<div class="a" style="left:503px;top:136px;width:1px;height:437px;background:#f1f1f1;"></div>
<div class="a" style="left:506px;top:136.3px;width:424px;height:14.7px;background:#e8f2fe;"></div>
<div class="a" style="left:470.3px;top:136.3px;width:11.2px;height:14.3px;background:#5a9de6;background-image:repeating-conic-gradient(#3585de 0 25%,#8fbdee 0 50%);background-size:2px 2px;"></div>
<span class="t" style="top:137.20px;font-size:11.5px;line-height:15px;color:#787878;font-family:'Liberation Mono', monospace;right:435.7px;letter-spacing:-.35px;">1</span>
<span class="t" style="top:137.00px;font-size:11.5px;line-height:15px;color:#000;font-family:'Liberation Mono', monospace;left:506.3px;white-space:pre;letter-spacing:-.3px;"><b style="color:#7f0055">package</b> control;</span>
<span class="t" style="top:151.32px;font-size:11.5px;line-height:15px;color:#787878;font-family:'Liberation Mono', monospace;right:435.7px;letter-spacing:-.35px;">2</span>
<span class="t" style="top:165.45px;font-size:11.5px;line-height:15px;color:#787878;font-family:'Liberation Mono', monospace;right:435.7px;letter-spacing:-.35px;">3</span>
<span class="t" style="top:165.25px;font-size:11.5px;line-height:15px;color:#000;font-family:'Liberation Mono', monospace;left:506.3px;white-space:pre;letter-spacing:-.3px;"><b style="color:#7f0055">import</b> java.util.Calendar;</span>
<svg class="a" style="left:494.8px;top:168.25px" width="9" height="9" viewBox="0 0 9 9"><circle cx="4.5" cy="4.5" r="3.8" fill="#bccbe0" stroke="#8da3c6" stroke-width=".9"/><path d="M2.5 4.5H6.5M4.5 2.5V6.5" stroke="#2a446e" stroke-width="1.5"/></svg>
<span class="t" style="top:179.57px;font-size:11.5px;line-height:15px;color:#787878;font-family:'Liberation Mono', monospace;right:435.7px;letter-spacing:-.35px;">8</span>
<span class="t" style="top:193.70px;font-size:11.5px;line-height:15px;color:#787878;font-family:'Liberation Mono', monospace;right:435.7px;letter-spacing:-.35px;">9</span>
<span class="t" style="top:193.50px;font-size:11.5px;line-height:15px;color:#000;font-family:'Liberation Mono', monospace;left:506.3px;white-space:pre;letter-spacing:-.3px;"><b style="color:#7f0055">public</b> <b style="color:#7f0055">class</b> OrganizerController {</span>
<span class="t" style="top:207.82px;font-size:11.5px;line-height:15px;color:#787878;font-family:'Liberation Mono', monospace;right:435.7px;letter-spacing:-.35px;">10</span>
<span class="t" style="top:221.95px;font-size:11.5px;line-height:15px;color:#787878;font-family:'Liberation Mono', monospace;right:435.7px;letter-spacing:-.35px;">11</span>
<span class="t" style="top:221.75px;font-size:11.5px;line-height:15px;color:#000;font-family:'Liberation Mono', monospace;left:506.3px;white-space:pre;letter-spacing:-.3px;">    <b style="color:#7f0055">private</b> List&lt;Participant&gt; <span style="color:#0000c0">participants</span>;</span>
<span class="t" style="top:236.07px;font-size:11.5px;line-height:15px;color:#787878;font-family:'Liberation Mono', monospace;right:435.7px;letter-spacing:-.35px;">12</span>
<span class="t" style="top:235.88px;font-size:11.5px;line-height:15px;color:#000;font-family:'Liberation Mono', monospace;left:506.3px;white-space:pre;letter-spacing:-.3px;">    <b style="color:#7f0055">private</b> List&lt;Activity&gt; <span style="color:#0000c0">activities</span>;</span>
<span class="t" style="top:250.20px;font-size:11.5px;line-height:15px;color:#787878;font-family:'Liberation Mono', monospace;right:435.7px;letter-spacing:-.35px;">13</span>
<span class="t" style="top:264.32px;font-size:11.5px;line-height:15px;color:#787878;font-family:'Liberation Mono', monospace;right:435.7px;letter-spacing:-.35px;">14</span>
<span class="t" style="top:264.12px;font-size:11.5px;line-height:15px;color:#000;font-family:'Liberation Mono', monospace;left:506.3px;white-space:pre;letter-spacing:-.3px;">    <b style="color:#7f0055">public</b> Activity createActivity(String <span style="color:#6a3e3e">name</span>, String <span style="color:#6a3e3e">desc</span>, <b style="color:#7f0055">boolean</b> <span style="color:#6a3e3e">privateAct</span>) {</span>
<svg class="a" style="left:494.8px;top:267.125px" width="9" height="9" viewBox="0 0 9 9"><circle cx="4.5" cy="4.5" r="3.8" fill="#dbe5f4" stroke="#8aa2cc" stroke-width="1"/><path d="M2.3 4.5H6.7" stroke="#56739f" stroke-width="1.2"/></svg>
<span class="t" style="top:278.45px;font-size:11.5px;line-height:15px;color:#787878;font-family:'Liberation Mono', monospace;right:435.7px;letter-spacing:-.35px;">15</span>
<span class="t" style="top:278.25px;font-size:11.5px;line-height:15px;color:#000;font-family:'Liberation Mono', monospace;left:506.3px;white-space:pre;letter-spacing:-.3px;">        Activity <span style="color:#6a3e3e">act</span> = <b style="color:#7f0055">new</b> Activity();</span>
<span class="t" style="top:292.57px;font-size:11.5px;line-height:15px;color:#787878;font-family:'Liberation Mono', monospace;right:435.7px;letter-spacing:-.35px;">16</span>
<span class="t" style="top:292.38px;font-size:11.5px;line-height:15px;color:#000;font-family:'Liberation Mono', monospace;left:506.3px;white-space:pre;letter-spacing:-.3px;">        <span style="color:#6a3e3e">act</span>.setName(<span style="color:#6a3e3e">name</span>);</span>
<span class="t" style="top:306.70px;font-size:11.5px;line-height:15px;color:#787878;font-family:'Liberation Mono', monospace;right:435.7px;letter-spacing:-.35px;">17</span>
<span class="t" style="top:306.50px;font-size:11.5px;line-height:15px;color:#000;font-family:'Liberation Mono', monospace;left:506.3px;white-space:pre;letter-spacing:-.3px;">        <span style="color:#6a3e3e">act</span>.setDescription(<span style="color:#6a3e3e">desc</span>);</span>
<span class="t" style="top:320.82px;font-size:11.5px;line-height:15px;color:#787878;font-family:'Liberation Mono', monospace;right:435.7px;letter-spacing:-.35px;">18</span>
<span class="t" style="top:320.62px;font-size:11.5px;line-height:15px;color:#000;font-family:'Liberation Mono', monospace;left:506.3px;white-space:pre;letter-spacing:-.3px;">        <span style="color:#6a3e3e">act</span>.setPrivateAct(<span style="color:#6a3e3e">privateAct</span>);</span>
<span class="t" style="top:334.95px;font-size:11.5px;line-height:15px;color:#787878;font-family:'Liberation Mono', monospace;right:435.7px;letter-spacing:-.35px;">19</span>
<span class="t" style="top:334.75px;font-size:11.5px;line-height:15px;color:#000;font-family:'Liberation Mono', monospace;left:506.3px;white-space:pre;letter-spacing:-.3px;">        <span style="color:#6a3e3e">act</span>.setActDate(Calendar.<i>getInstance</i>().getTime());</span>
<span class="t" style="top:349.07px;font-size:11.5px;line-height:15px;color:#787878;font-family:'Liberation Mono', monospace;right:435.7px;letter-spacing:-.35px;">20</span>
<span class="t" style="top:348.88px;font-size:11.5px;line-height:15px;color:#000;font-family:'Liberation Mono', monospace;left:506.3px;white-space:pre;letter-spacing:-.3px;">        <span style="color:#0000c0">activities</span>.add(<span style="color:#6a3e3e">act</span>);</span>
<span class="t" style="top:363.20px;font-size:11.5px;line-height:15px;color:#787878;font-family:'Liberation Mono', monospace;right:435.7px;letter-spacing:-.35px;">21</span>
<span class="t" style="top:363.00px;font-size:11.5px;line-height:15px;color:#000;font-family:'Liberation Mono', monospace;left:506.3px;white-space:pre;letter-spacing:-.3px;">        <b style="color:#7f0055">return</b> <span style="color:#6a3e3e">act</span>;</span>
<span class="t" style="top:377.32px;font-size:11.5px;line-height:15px;color:#787878;font-family:'Liberation Mono', monospace;right:435.7px;letter-spacing:-.35px;">22</span>
<span class="t" style="top:377.12px;font-size:11.5px;line-height:15px;color:#000;font-family:'Liberation Mono', monospace;left:506.3px;white-space:pre;letter-spacing:-.3px;">    }</span>
<span class="t" style="top:391.45px;font-size:11.5px;line-height:15px;color:#787878;font-family:'Liberation Mono', monospace;right:435.7px;letter-spacing:-.35px;">23</span>
<span class="t" style="top:405.57px;font-size:11.5px;line-height:15px;color:#787878;font-family:'Liberation Mono', monospace;right:435.7px;letter-spacing:-.35px;">24</span>
<span class="t" style="top:405.38px;font-size:11.5px;line-height:15px;color:#000;font-family:'Liberation Mono', monospace;left:506.3px;white-space:pre;letter-spacing:-.3px;">    <b style="color:#7f0055">public</b> Participant createParticipant(String <span style="color:#6a3e3e">realName</span>, String <span style="color:#6a3e3e">nickName</span>, String <span style="color:#6a3e3e">telephone</span>) {</span>
<svg class="a" style="left:494.8px;top:408.375px" width="9" height="9" viewBox="0 0 9 9"><circle cx="4.5" cy="4.5" r="3.8" fill="#dbe5f4" stroke="#8aa2cc" stroke-width="1"/><path d="M2.3 4.5H6.7" stroke="#56739f" stroke-width="1.2"/></svg>
<span class="t" style="top:419.70px;font-size:11.5px;line-height:15px;color:#787878;font-family:'Liberation Mono', monospace;right:435.7px;letter-spacing:-.35px;">25</span>
<span class="t" style="top:419.50px;font-size:11.5px;line-height:15px;color:#000;font-family:'Liberation Mono', monospace;left:506.3px;white-space:pre;letter-spacing:-.3px;">        Participant <span style="color:#6a3e3e">participant</span> = <b style="color:#7f0055">new</b> Participant(<span style="color:#6a3e3e">realName</span>, <span style="color:#6a3e3e">telephone</span>);</span>
<span class="t" style="top:433.82px;font-size:11.5px;line-height:15px;color:#787878;font-family:'Liberation Mono', monospace;right:435.7px;letter-spacing:-.35px;">26</span>
<span class="t" style="top:433.62px;font-size:11.5px;line-height:15px;color:#000;font-family:'Liberation Mono', monospace;left:506.3px;white-space:pre;letter-spacing:-.3px;">        <span style="color:#0000c0">participants</span>.add(<span style="color:#6a3e3e">participant</span>);</span>
<span class="t" style="top:447.95px;font-size:11.5px;line-height:15px;color:#787878;font-family:'Liberation Mono', monospace;right:435.7px;letter-spacing:-.35px;">27</span>
<span class="t" style="top:447.75px;font-size:11.5px;line-height:15px;color:#000;font-family:'Liberation Mono', monospace;left:506.3px;white-space:pre;letter-spacing:-.3px;">        <b style="color:#7f0055">return</b> <span style="color:#6a3e3e">participant</span>;</span>
<span class="t" style="top:462.07px;font-size:11.5px;line-height:15px;color:#787878;font-family:'Liberation Mono', monospace;right:435.7px;letter-spacing:-.35px;">28</span>
<span class="t" style="top:461.88px;font-size:11.5px;line-height:15px;color:#000;font-family:'Liberation Mono', monospace;left:506.3px;white-space:pre;letter-spacing:-.3px;">    }</span>
<span class="t" style="top:476.20px;font-size:11.5px;line-height:15px;color:#787878;font-family:'Liberation Mono', monospace;right:435.7px;letter-spacing:-.35px;">29</span>
<span class="t" style="top:490.32px;font-size:11.5px;line-height:15px;color:#787878;font-family:'Liberation Mono', monospace;right:435.7px;letter-spacing:-.35px;">30</span>
<span class="t" style="top:490.12px;font-size:11.5px;line-height:15px;color:#000;font-family:'Liberation Mono', monospace;left:506.3px;white-space:pre;letter-spacing:-.3px;">    <b style="color:#7f0055">public</b> List&lt;Participant&gt; getParticipants() {</span>
<svg class="a" style="left:494.8px;top:493.125px" width="9" height="9" viewBox="0 0 9 9"><circle cx="4.5" cy="4.5" r="3.8" fill="#dbe5f4" stroke="#8aa2cc" stroke-width="1"/><path d="M2.3 4.5H6.7" stroke="#56739f" stroke-width="1.2"/></svg>
<span class="t" style="top:504.45px;font-size:11.5px;line-height:15px;color:#787878;font-family:'Liberation Mono', monospace;right:435.7px;letter-spacing:-.35px;">31</span>
<span class="t" style="top:504.25px;font-size:11.5px;line-height:15px;color:#000;font-family:'Liberation Mono', monospace;left:506.3px;white-space:pre;letter-spacing:-.3px;">        <b style="color:#7f0055">return</b> <span style="color:#0000c0">participants</span>;</span>
<span class="t" style="top:518.58px;font-size:11.5px;line-height:15px;color:#787878;font-family:'Liberation Mono', monospace;right:435.7px;letter-spacing:-.35px;">32</span>
<span class="t" style="top:518.38px;font-size:11.5px;line-height:15px;color:#000;font-family:'Liberation Mono', monospace;left:506.3px;white-space:pre;letter-spacing:-.3px;">    }</span>
<span class="t" style="top:532.70px;font-size:11.5px;line-height:15px;color:#787878;font-family:'Liberation Mono', monospace;right:435.7px;letter-spacing:-.35px;">33</span>
<span class="t" style="top:546.83px;font-size:11.5px;line-height:15px;color:#787878;font-family:'Liberation Mono', monospace;right:435.7px;letter-spacing:-.35px;">34</span>
<span class="t" style="top:546.62px;font-size:11.5px;line-height:15px;color:#000;font-family:'Liberation Mono', monospace;left:506.3px;white-space:pre;letter-spacing:-.3px;">    <b style="color:#7f0055">public</b> List&lt;Activity&gt; getActivities() {</span>
<svg class="a" style="left:494.8px;top:549.625px" width="9" height="9" viewBox="0 0 9 9"><circle cx="4.5" cy="4.5" r="3.8" fill="#dbe5f4" stroke="#8aa2cc" stroke-width="1"/><path d="M2.3 4.5H6.7" stroke="#56739f" stroke-width="1.2"/></svg>
<span class="t" style="top:560.95px;font-size:11.5px;line-height:15px;color:#787878;font-family:'Liberation Mono', monospace;right:435.7px;letter-spacing:-.35px;">35</span>
<span class="t" style="top:560.75px;font-size:11.5px;line-height:15px;color:#000;font-family:'Liberation Mono', monospace;left:506.3px;white-space:pre;letter-spacing:-.3px;">        <b style="color:#7f0055">return</b> <span style="color:#0000c0">activities</span>;</span>
<div class="a" style="left:676.5px;top:166.5px;width:6px;height:12px;border:1px solid #8a8a8a;box-sizing:border-box;"></div>
<div class="a" style="left:679px;top:174.5px;width:1px;height:1px;background:#8a8a8a;"></div>
</div></div>
<div class="a" style="left:468px;top:573px;width:36px;height:15.5px;background:#f8f8f8;"></div>
<div class="a" style="left:504px;top:573.3px;width:426px;height:15.2px;background:#f0f0f0;"></div>
<svg class="a" style="left:508.5px;top:576px" width="8" height="10" viewBox="0 0 8 10"><path d="M6 1.4L2 5L6 8.6" stroke="#222" stroke-width="2.1" fill="none"/></svg>
<div class="a" style="left:520px;top:573.5px;width:343px;height:14.2px;background:#c9c9c9;"></div>
<div class="a" style="left:0px;top:591px;width:930px;height:3px;background:#fff;"></div>
<div class="a" style="left:0px;top:591px;width:460px;height:1px;background:#e0e1e4;"></div>
<div class="a" style="left:470px;top:591px;width:460px;height:1px;background:#e0e1e4;"></div>
<div class="a" style="left:0px;top:593.6px;width:930px;height:1px;background:#b4b8c2;"></div>
<div class="a" style="left:0px;top:594.5px;width:930px;height:24.2px;background:#e1e6f6;"></div>
<div class="a" style="left:0px;top:618.6px;width:930px;height:1.4px;background:#55585e;"></div>
<div class="a" style="left:603.5px;top:599px;width:1px;height:14px;background:repeating-linear-gradient(#8d93a0 0 1px,transparent 1px 3px);"></div>
<div class="a" style="left:873px;top:598px;width:1px;height:16px;background:repeating-linear-gradient(#8d93a0 0 1px,transparent 1px 3px);"></div>
<div class="a" style="left:876px;top:596px;width:54px;height:22px;border:1px solid #c3c7d2;box-sizing:border-box;border-right:none;border-bottom:none;background:#e4e8f7;"></div>
<svg class="a" style="left:880px;top:600px" width="16" height="14" viewBox="0 0 16 14"><path d="M1 6.5L5 3H11L8 6.5L4 9Z" fill="#f2f2f2" stroke="#8a8a8a" stroke-width=".8"/><path d="M7.5 7Q7.5 4.5 10.5 4.5Q13.5 4.5 13.5 7V12.5H7.5Z" fill="#e9b94a" stroke="#b98a22" stroke-width=".9"/><rect x="8.5" y="8" width="4" height="3" fill="#d6a12e"/></svg>
<div class="a" style="left:901px;top:598px;width:1px;height:17px;background:#8e93a0;"></div>
<svg class="a" style="left:909.5px;top:600.5px" width="15" height="13" viewBox="0 0 15 13"><path d="M1 2.5L5 1L10 2.5L14 1V10.5L10 12L5 10.5L1 12Z" fill="#fdf0dc" stroke="#f0a85a" stroke-width="1.2"/><path d="M5 1V10.5M10 2.5V12" stroke="#f0a85a" stroke-width="1"/></svg>
</div></body></html>
